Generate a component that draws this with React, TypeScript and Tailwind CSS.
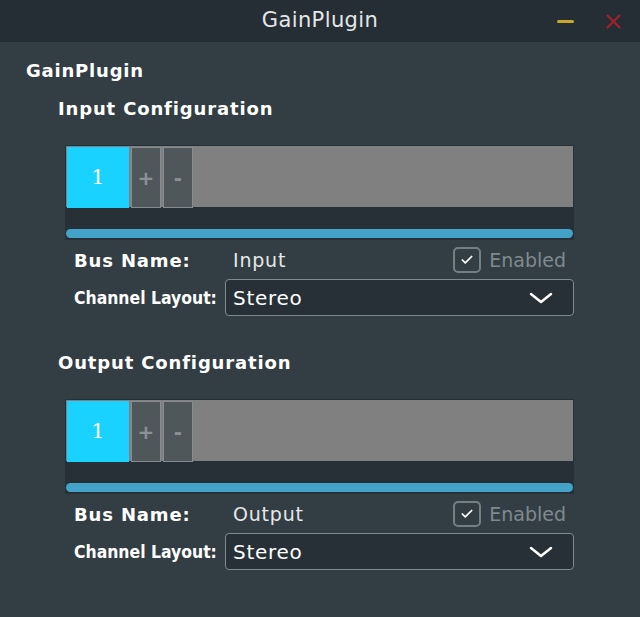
import { Check } from "lucide-react"

const font = { fontFamily: '"DejaVu Sans", Verdana, sans-serif' }

const BusSection = ({ title, busName }: { title: string; busName: string }) => {
  return (
    <div className="flex flex-col">
      <div className="ml-[58px] h-[22px] leading-[22px] text-[18px] font-bold text-white tracking-[0.85px]">{title}</div>
      <div className="ml-[65px] mt-[25px] w-[509px] h-[95px] flex flex-col bg-[#263036]">
        <div className="h-[63px] bg-[#808080] flex items-start p-px gap-[2px] border border-[#263036]">
          <button className="w-[62px] h-[61px] bg-[#19d2ff] text-white text-[21px] leading-none flex items-center justify-center" style={{ fontFamily: '"DejaVu Serif", serif' }}>1</button>
          <button className="w-[30px] h-[61px] bg-[#50575b] border border-[#858d91] text-[#8b9296] text-[20px] font-bold flex items-center justify-center">+</button>
          <button className="w-[30px] h-[61px] bg-[#50575b] border border-[#858d91] text-[#8b9296] text-[20px] font-bold flex items-center justify-center">-</button>
        </div>
        <div className="flex-1 flex items-end px-px pb-[2px]">
          <div className="w-full h-[9px] rounded-full bg-[#42a2c8]"></div>
        </div>
      </div>
      <div className="ml-[74px] mt-[7px] w-[492px] h-[26px] flex items-center">
        <span className="w-[159px] text-[18px] font-bold text-white tracking-[0.85px]">Bus Name:</span>
        <span className="text-[19px] text-[#e6e8e9] tracking-[0.8px]">{busName}</span>
        <div className="ml-auto flex items-center gap-[8px]">
          <div className="w-[28px] h-[26px] rounded-[5px] border-2 border-[#747f84] flex items-center justify-center">
            <Check size={14} strokeWidth={3} className="text-white" />
          </div>
          <span className="text-[19px] text-[#7f8a8e]">Enabled</span>
        </div>
      </div>
      <div className="ml-[74px] mt-[6px] h-[37px] flex items-center">
        <div className="w-[151px] shrink-0">
          <span className="text-[18px] font-bold text-white whitespace-nowrap inline-block origin-left scale-x-[0.87]">Channel Layout:</span>
        </div>
        <div className="w-[349px] h-[37px] rounded-[4px] border border-[#7f8a8e] bg-[#263036] flex items-center pl-[7px] pr-[20px]">
          <span className="text-[20px] text-white tracking-[0.7px]">Stereo</span>
          <svg className="ml-auto" width="24" height="12" viewBox="0 0 24 12" fill="none">
            <path d="M2 2 L12 10 L22 2" stroke="white" strokeWidth="2.5" strokeLinecap="round" strokeLinejoin="round" />
          </svg>
        </div>
      </div>
    </div>
  )
}

const App = () => {
  return (
    <div className="w-[640px] h-[617px] flex flex-col bg-[#323e44] overflow-hidden" style={font}>
      <div className="relative h-[42px] bg-[#252e35] flex items-center justify-center">
        <span className="text-[21px] text-[#e4e6e7] tracking-[0.4px]">GainPlugin</span>
        <div className="absolute right-[19px] top-0 h-[42px] flex items-center gap-[32px]">
          <div className="w-[17px] h-[3px] bg-[#c9a72a] rounded-sm"></div>
          <svg width="15" height="15" viewBox="0 0 15 15">
            <path d="M1 1 L14 14 M14 1 L1 14" stroke="#a9202a" strokeWidth="2" />
          </svg>
        </div>
      </div>
      <div className="flex-1 flex flex-col">
        <div className="ml-[26px] mt-[18px] h-[22px] leading-[22px] text-[18px] font-bold text-white tracking-[0.8px]">GainPlugin</div>
        <div className="mt-[16px]">
          <BusSection title="Input Configuration" busName="Input" />
        </div>
        <div className="mt-[36px]">
          <BusSection title="Output Configuration" busName="Output" />
        </div>
      </div>
    </div>
  )
}

export default App
